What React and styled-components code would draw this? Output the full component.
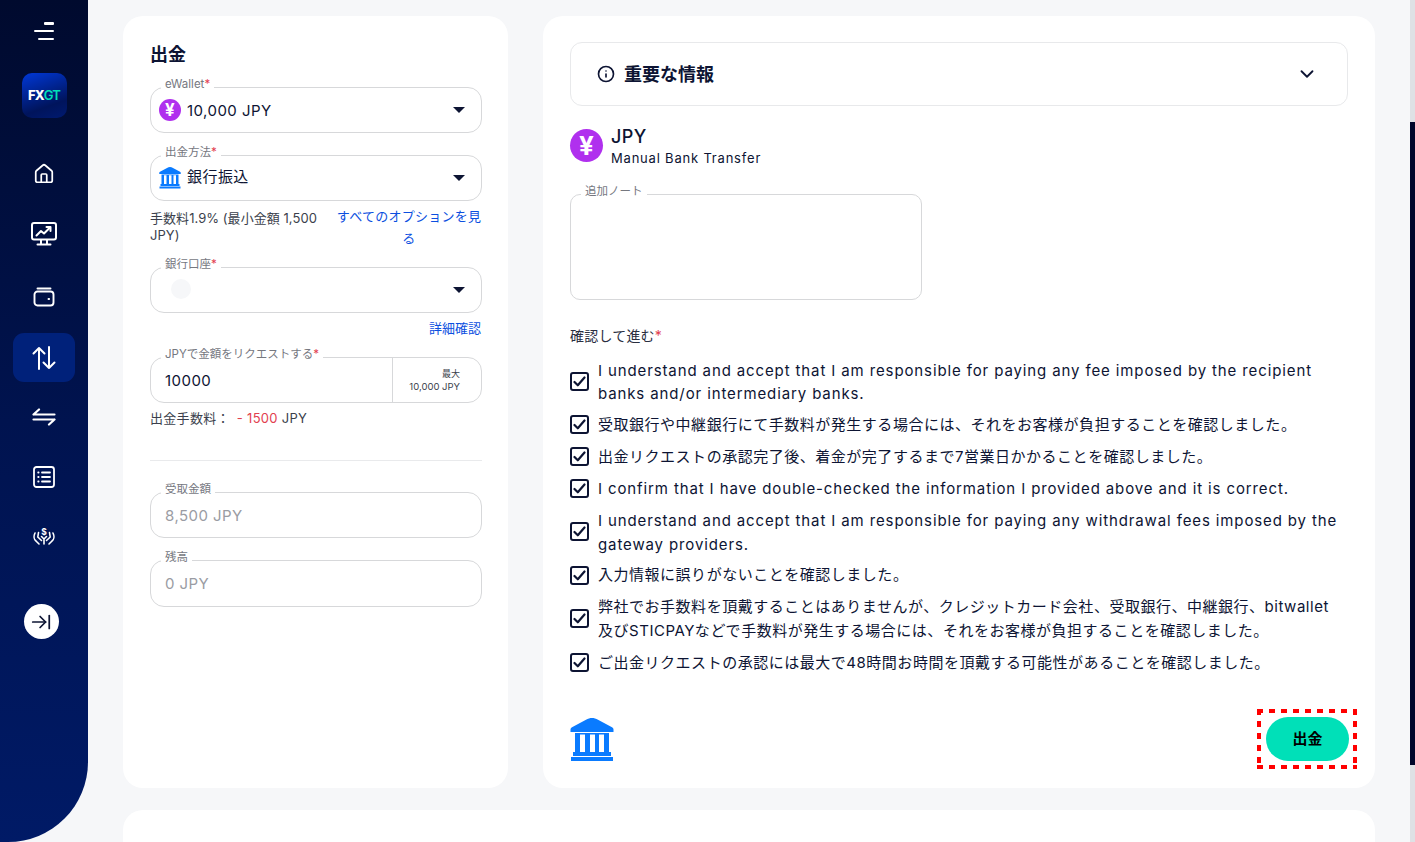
import React from "react";
import styled, { createGlobalStyle } from "styled-components";
import { ArrowRightToLine, ChevronDown, House, Info } from "lucide-react";

const FONT = `Inter, "Noto Sans CJK JP", sans-serif`;

const checks = [
  { text: "I understand and accept that I am responsible for paying any fee imposed by the recipient banks and/or intermediary banks.", latin: true },
  { text: "受取銀行や中継銀行にて手数料が発生する場合には、それをお客様が負担することを確認しました。" },
  { text: "出金リクエストの承認完了後、着金が完了するまで7営業日かかることを確認しました。" },
  { text: "I confirm that I have double-checked the information I provided above and it is correct.", latin: true },
  { text: "I understand and accept that I am responsible for paying any withdrawal fees imposed by the gateway providers.", latin: true },
  { text: "入力情報に誤りがないことを確認しました。" },
  { text: "弊社でお手数料を頂戴することはありませんが、クレジットカード会社、受取銀行、中継銀行、bitwallet及びSTICPAYなどで手数料が発生する場合には、それをお客様が負担することを確認しました。", narrow: true },
  { text: "ご出金リクエストの承認には最大で48時間お時間を頂戴する可能性があることを確認しました。" },
];

const MonitorIcon = () => (
  <svg width="26" height="24" viewBox="0 0 26 24" fill="none" stroke="#fff" strokeWidth="2" strokeLinecap="round" strokeLinejoin="round">
    <rect x="1" y="1" width="24" height="16.5" rx="2" />
    <path d="M5.5 13.5l4.5-4.5 3 2.500 6-6" />
    <path d="M15.5 5h4v4" />
    <path d="M10 18v4M16 18v4M6.500 22.500h13" />
  </svg>
);

const WalletIcon = () => (
  <svg width="22" height="20" viewBox="0 0 22 20" fill="none" stroke="#fff" strokeWidth="1.9" strokeLinecap="round" strokeLinejoin="round">
    <path d="M4.500 1.500h13" />
    <rect x="1.500" y="4.500" width="19" height="14" rx="3" />
    <path d="M15.500 12h.6" />
  </svg>
);

const UpDownIcon = () => (
  <svg width="24" height="24" viewBox="0 0 24 24" fill="none" stroke="#fff" strokeWidth="2" strokeLinecap="round" strokeLinejoin="round">
    <path d="M7 23V2M1.500 7.500L7 2l5.500 5.500" />
    <path d="M17 1v21M11.500 16.500L17 22l5.500-5.500" />
  </svg>
);

const SwapIcon = () => (
  <svg width="24" height="18" viewBox="0 0 24 18" fill="none" stroke="#fff" strokeWidth="2.2" strokeLinecap="round" strokeLinejoin="round">
    <path d="M1.500 6.500h21M1.500 6.500L7 1.500" />
    <path d="M22.500 11.500h-21M22.500 11.500L17 16.500" />
  </svg>
);

const ListIcon = () => (
  <svg width="22" height="22" viewBox="0 0 22 22" fill="none" stroke="#fff" strokeWidth="1.8" strokeLinecap="round" strokeLinejoin="round">
    <rect x="1" y="1" width="20" height="20" rx="2.500" />
    <path d="M9 6.500h8M9 11h8M9 15.500h8M5.200 6.500h.4M5.200 11h.4M5.200 15.500h.4" />
  </svg>
);

const HandsIcon = () => (
  <svg width="22" height="17" viewBox="0 0 22 17" fill="none" stroke="#fff" strokeWidth="1.600" strokeLinecap="round" strokeLinejoin="round">
    <path d="M2 5C.5 8 1 11.500 3 13l3 3" />
    <path d="M5.500 4.500L4.800 9l3.700 3.500" />
    <path d="M20 5c1.500 3 1 6.500-1 8l-3 3" />
    <path d="M16.500 4.500L17.200 9l-3.700 3.500" />
    <path d="M11 16v-5M8.500 8.500L11 11l2.500-2.500" />
    <text x="11" y="7" fontSize="8.500" fontWeight="700" fill="#fff" stroke="none" textAnchor="middle" fontFamily="Inter, sans-serif">$</text>
  </svg>
);

const BankIcon = ({ size }) => (
  <svg width={size} height={size} viewBox="0 0 44 44" fill="#0a7bff">
    <path d="M22 0c2 0 4 .6 6 1.800l14 7.500c1 .6 1.500 1.400 1.500 2.400V14H.5v-2.300c0-1 .5-1.800 1.500-2.400l14-7.500C18 .6 20 0 22 0z" />
    <path d="M5 15h34v19H5zM10 16.500v17.500h5V16.500zM20 16.500v17.500h5V16.500zM29 16.500v17.500h5V16.500z" fillRule="evenodd" />
    <rect x="3" y="34" width="38" height="4" />
    <rect x="1" y="39" width="42" height="4" />
  </svg>
);

const CheckMark = () => (
  <svg width="13" height="11" viewBox="0 0 13 11" fill="none" stroke="#0d1433" strokeWidth="2.200" strokeLinecap="round" strokeLinejoin="round">
    <path d="M1.500 6l3.300 3.300L11.500 1.500" />
  </svg>
);

const SelectField = ({ label, icon, children }) => (
  <Field>
    <FieldLabel>{label}<Req>*</Req></FieldLabel>
    <FieldValue>{icon}{children}</FieldValue>
    <Caret />
  </Field>
);

const App = () => {
  return (
    <>
      <GlobalStyle />
      <Page>
        <Sidebar>
          <Burger><i /><i /><i /></Burger>
          <Logo>FX<b>GT</b></Logo>
          <NavItem $mt={31}><House size={22} color="#fff" strokeWidth={1.9} /></NavItem>
          <NavItem $mt={11}><MonitorIcon /></NavItem>
          <NavItem $mt={14}><WalletIcon /></NavItem>
          <NavItem $mt={12} $active><UpDownIcon /></NavItem>
          <NavItem $mt={10}><SwapIcon /></NavItem>
          <NavItem $mt={11}><ListIcon /></NavItem>
          <NavItem $mt={11}><HandsIcon /></NavItem>
          <ExpandButton><ArrowRightToLine size={22} color="#0d1433" strokeWidth={1.9} /></ExpandButton>
        </Sidebar>

        <Main>
          <Columns>
            <LeftCard>
              <CardTitle>出金</CardTitle>
              <Stack $mt={21}>
                <SelectField label="eWallet" icon={<Yen $size={22}>¥</Yen>}>10,000 JPY</SelectField>
              </Stack>
              <Stack $mt={22}>
                <SelectField label="出金方法" icon={<BankIcon size={22} />}><CjkValue>銀行振込</CjkValue></SelectField>
              </Stack>
              <NoteRow>
                <Note>手数料1.9% (最小金額 1,500 JPY)</Note>
                <OptionLink>すべてのオプションを見る</OptionLink>
              </NoteRow>
              <Stack $mt={16}>
                <SelectField label="銀行口座" icon={<Placeholder />} />
              </Stack>
              <DetailLink>詳細確認</DetailLink>
              <Stack $mt={21}>
                <Field>
                  <FieldLabel>JPYで金額をリクエストする<Req>*</Req></FieldLabel>
                  <FieldValue $big>10000</FieldValue>
                  <MaxBox>
                    <small>最大</small>
                    <span>10,000 JPY</span>
                  </MaxBox>
                </Field>
              </Stack>
              <FeeRow>出金手数料：<FeeAmount>- 1500</FeeAmount> JPY</FeeRow>
              <Divider />
              <Stack $mt={31}>
                <Field>
                  <FieldLabel>受取金額</FieldLabel>
                  <FieldValue $muted>8,500 JPY</FieldValue>
                </Field>
              </Stack>
              <Stack $mt={22}>
                <Field $h={47}>
                  <FieldLabel>残高</FieldLabel>
                  <FieldValue $muted>0 JPY</FieldValue>
                </Field>
              </Stack>
            </LeftCard>

            <RightCard>
              <Accordion>
                <AccordionTitle>
                  <Info size={18} color="#0d1433" strokeWidth={2.2} />
                  <AccordionText>重要な情報</AccordionText>
                </AccordionTitle>
                <ChevronDown size={22} color="#0d1433" strokeWidth={2} />
              </Accordion>
              <CurrencyRow>
                <Yen $size={33}>¥</Yen>
                <div>
                  <CurrencyName>JPY</CurrencyName>
                  <CurrencyMethod>Manual Bank Transfer</CurrencyMethod>
                </div>
              </CurrencyRow>
              <NoteField>
                <FieldLabel>追加ノート</FieldLabel>
              </NoteField>
              <ConfirmLabel>確認して進む<Req>*</Req></ConfirmLabel>
              <CheckList>
                {checks.map((c) => (
                  <CheckRow key={c.text}>
                    <CheckBox><CheckMark /></CheckBox>
                    <CheckText $latin={c.latin} $narrow={c.narrow}>{c.text}</CheckText>
                  </CheckRow>
                ))}
              </CheckList>
              <CardFooter>
                <FooterIcon><BankIcon size={44} /></FooterIcon>
                <Highlight>
                  <SubmitButton>出金</SubmitButton>
                </Highlight>
              </CardFooter>
            </RightCard>
          </Columns>
          <BottomCard />
        </Main>

        <ScrollTrack><ScrollThumb /></ScrollTrack>
      </Page>
    </>
  );
};

const GlobalStyle = createGlobalStyle`
  html, body {
    margin: 0;
    height: 100%;
    overflow: hidden;
    background: #f6f7f9;
    font-family: ${FONT};
    color: #0d1433;
  }
  * { box-sizing: border-box; }
`;

const Page = styled.div`
  display: flex;
  width: 1415px;
  height: 842px;
  overflow: hidden;
  background: #f6f7f9;
`;

const Sidebar = styled.aside`
  width: 88px;
  flex-shrink: 0;
  height: 842px;
  display: flex;
  flex-direction: column;
  align-items: center;
  padding-top: 22px;
  background: linear-gradient(180deg, #000a2e 0%, #00134f 50%, #001a66 100%);
  border-bottom-right-radius: 80px;
`;

const Burger = styled.div`
  width: 20px;
  height: 18px;
  display: flex;
  flex-direction: column;
  align-items: flex-end;
  justify-content: space-between;

  i {
    display: block;
    height: 2.500px;
    background: #fff;
    border-radius: 1px;
  }
  i:nth-child(1) { width: 10px; }
  i:nth-child(2) { width: 20px; }
  i:nth-child(3) { width: 16px; }
`;

const Logo = styled.div`
  width: 45px;
  height: 45px;
  margin-top: 33px;
  padding-bottom: 1px;
  border-radius: 10px;
  display: flex;
  align-items: center;
  justify-content: center;
  background: linear-gradient(160deg, #0038d8 0%, #00145c 70%, #001a70 100%);
  color: #fff;
  font-size: 13px;
  font-weight: 800;
  letter-spacing: -0.8px;

  b {
    color: #00e0b8;
    font-weight: 600;
  }
`;

const NavItem = styled.div`
  width: 62px;
  height: 49px;
  margin-top: ${(p) => p.$mt}px;
  flex-shrink: 0;
  display: flex;
  align-items: center;
  justify-content: center;
  border-radius: 11px;
  background: ${(p) => (p.$active ? "#00217a" : "transparent")};
`;

const ExpandButton = styled.div`
  width: 35px;
  height: 35px;
  margin-top: 43px;
  margin-right: 6px;
  border-radius: 50%;
  background: #fff;
  display: flex;
  align-items: center;
  justify-content: center;
`;

const Main = styled.main`
  flex: 1;
  min-width: 0;
  padding: 16px 35px 0;
  overflow: hidden;
`;

const Columns = styled.div`
  display: grid;
  grid-template-columns: 385px 832px;
  gap: 35px;
  height: 772px;
`;

const Card = styled.section`
  background: #fff;
  border-radius: 20px;
`;

const LeftCard = styled(Card)`
  padding: 28px 26px 0 27px;
`;

const RightCard = styled(Card)`
  padding: 26px 27px 0;
  display: flex;
  flex-direction: column;
`;

const BottomCard = styled(Card)`
  height: 200px;
  margin-top: 22px;
`;

const CardTitle = styled.h2`
  margin: 0;
  font-size: 18px;
  line-height: 22px;
  font-weight: 700;
`;

const Stack = styled.div`
  margin-top: ${(p) => p.$mt}px;
`;

const Field = styled.div`
  position: relative;
  display: flex;
  align-items: center;
  height: ${(p) => p.$h || 46}px;
  border: 1px solid #d7d8da;
  border-radius: 14px;
`;

const FieldLabel = styled.label`
  position: absolute;
  left: 10px;
  top: -12px;
  padding: 0 4px;
  background: #fff;
  font-size: 11.5px;
  line-height: 16px;
  color: #76787f;
`;

const Req = styled.span`
  color: #e2404f;
`;

const FieldValue = styled.div`
  flex: 1;
  display: flex;
  align-items: center;
  gap: 6px;
  padding-left: ${(p) => (p.$big || p.$muted ? 14 : 8)}px;
  font-size: 15px;
  letter-spacing: 0.45px;
  color: ${(p) => (p.$muted ? "#9a9ca3" : "#0d1433")};
`;

const CjkValue = styled.span`
  margin-bottom: 5px;
`;

const Caret = styled.span`
  position: absolute;
  right: 16px;
  top: 19px;
  width: 0;
  height: 0;
  border-left: 6px solid transparent;
  border-right: 6px solid transparent;
  border-top: 6px solid #0d1433;
`;

const Yen = styled.span`
  width: ${(p) => p.$size}px;
  height: ${(p) => p.$size}px;
  flex-shrink: 0;
  border-radius: 50%;
  background: #b030ee;
  color: #fff;
  display: flex;
  align-items: center;
  justify-content: center;
  font-size: ${(p) => Math.round(p.$size * 0.78)}px;
  font-weight: 700;
`;

const Placeholder = styled.span`
  width: 20px;
  height: 20px;
  margin-left: 12px;
  margin-top: -2px;
  border-radius: 50%;
  background: #f6f7f9;
`;

const NoteRow = styled.div`
  display: flex;
  justify-content: space-between;
  margin-top: 6px;
  height: 44px;
`;

const Note = styled.div`
  width: 172px;
  padding-top: 3px;
  font-size: 13px;
  line-height: 17px;
  letter-spacing: 0.05px;
  color: #3b3f4c;
`;

const OptionLink = styled.a`
  width: 146px;
  margin-top: -2px;
  text-align: center;
  font-size: 13px;
  line-height: 22px;
  letter-spacing: 0.25px;
  color: #0b4fe0;
`;

const DetailLink = styled.a`
  display: block;
  margin-top: 7px;
  padding-right: 1px;
  text-align: right;
  font-size: 13px;
  line-height: 16px;
  color: #0b4fe0;
`;

const MaxBox = styled.div`
  width: 89px;
  height: 100%;
  border-left: 1px solid #d7d8da;
  display: flex;
  flex-direction: column;
  align-items: flex-end;
  justify-content: center;
  gap: 2px;
  padding-right: 21px;
  color: #3b3f4c;

  small {
    font-size: 9px;
    line-height: 11px;
  }
  span {
    font-size: 9.5px;
    line-height: 11px;
    white-space: nowrap;
  }
`;

const FeeRow = styled.div`
  margin-top: 7px;
  font-size: 13px;
  line-height: 16px;
  letter-spacing: 0.3px;
  color: #3b3f4c;
`;

const FeeAmount = styled.span`
  color: #e2404f;
  margin-left: 7px;
`;

const Divider = styled.hr`
  margin: 34px 0 0;
  border: 0;
  border-top: 1px solid #e9eaec;
`;

const Accordion = styled.div`
  flex-shrink: 0;
  height: 64px;
  border: 1px solid #e8e9eb;
  border-radius: 12px;
  display: flex;
  align-items: center;
  justify-content: space-between;
  padding: 0 29px 0 26px;
`;

const AccordionTitle = styled.div`
  display: flex;
  align-items: center;
  gap: 9px;
  font-size: 18px;
  font-weight: 700;
`;

const AccordionText = styled.span`
  margin-bottom: 3px;
`;

const CurrencyRow = styled.div`
  display: flex;
  align-items: flex-start;
  gap: 8px;
  margin-top: 23px;
`;

const CurrencyName = styled.div`
  font-size: 18px;
  line-height: 16px;
  font-weight: 500;
  letter-spacing: 0.4px;
`;

const CurrencyMethod = styled.div`
  margin-top: 5px;
  font-size: 13px;
  line-height: 16px;
  letter-spacing: 0.8px;
`;

const NoteField = styled.div`
  position: relative;
  width: 352px;
  height: 106px;
  margin-top: 28px;
  flex-shrink: 0;
  border: 1px solid #d7d8da;
  border-radius: 10px;
`;

const ConfirmLabel = styled.div`
  margin-top: 27px;
  font-size: 14px;
  line-height: 18px;
  letter-spacing: 0.2px;
  color: #2a2e3f;
`;

const CheckList = styled.div`
  display: flex;
  flex-direction: column;
  gap: 8.3px;
  margin-top: 12.5px;
`;

const CheckRow = styled.div`
  display: flex;
  align-items: center;
  gap: 9px;
`;

const CheckBox = styled.span`
  width: 19px;
  height: 19px;
  flex-shrink: 0;
  border: 2px solid #0d1433;
  border-radius: 3px;
  display: flex;
  align-items: center;
  justify-content: center;
`;

const CheckText = styled.span`
  max-width: ${(p) => (p.$narrow ? "740px" : "none")};
  margin-top: ${(p) => (p.$latin ? "1px" : "0")};
  margin-bottom: ${(p) => (p.$latin ? "-1px" : "0")};
  font-size: 15px;
  line-height: 23.5px;
  letter-spacing: ${(p) => (p.$latin ? "0.88px" : "0.52px")};
  color: #0d1433;
`;

const CardFooter = styled.div`
  margin-top: auto;
  margin-right: -9px;
  padding-bottom: 19px;
  display: flex;
  align-items: center;
  justify-content: space-between;
`;

const FooterIcon = styled.span`
  display: flex;
  padding-top: 2px;
`;

const Highlight = styled.div`
  padding: 8px 8px 8px 9px;
  background:
    repeating-linear-gradient(90deg, #ff0000 0 6px, transparent 6px 12px) top / 100% 4px no-repeat,
    repeating-linear-gradient(90deg, #ff0000 0 6px, transparent 6px 12px) bottom / 100% 4px no-repeat,
    repeating-linear-gradient(180deg, #ff0000 0 6px, transparent 6px 12px) left / 4px 100% no-repeat,
    repeating-linear-gradient(180deg, #ff0000 0 6px, transparent 6px 12px) right / 4px 100% no-repeat;
`;

const SubmitButton = styled.button`
  display: block;
  width: 83px;
  height: 44px;
  padding: 0 0 4px;
  border: 0;
  border-radius: 22px;
  background: #00e0b8;
  color: #000;
  font-family: ${FONT};
  font-size: 15px;
  font-weight: 700;
`;

const ScrollTrack = styled.div`
  width: 5px;
  flex-shrink: 0;
  background: #dfe1e5;
  padding-top: 122px;
`;

const ScrollThumb = styled.div`
  height: 643px;
  background: #00062a;
`;

export default App;
